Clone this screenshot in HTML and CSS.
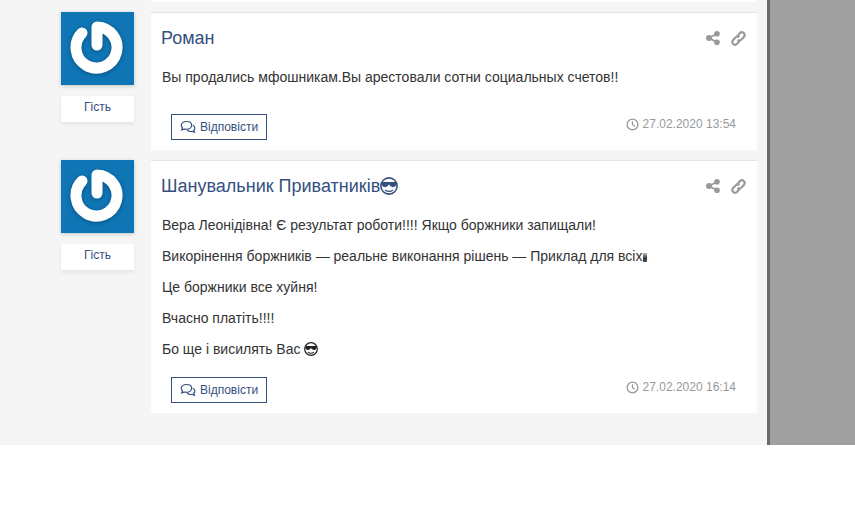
FILE: index.html
```html
<!DOCTYPE html>
<html>
<head lang="en">
    <meta charset="UTF-8">
    <title>Коментарі</title>
    <link rel="stylesheet" href="styles.css">
</head>
<body>
<svg class="defs" width="0" height="0">
    <symbol id="i-logo" viewBox="0 0 72 72">
        <path d="M21 21A20.500 20.500 0 1 0 36 15V33" fill="none" stroke="#fff" stroke-width="11" stroke-linecap="round" stroke-linejoin="round"/>
    </symbol>
    <symbol id="i-share" viewBox="0 0 14 14">
        <circle cx="11" cy="2.800" r="2.800"/>
        <circle cx="11" cy="11.200" r="2.800"/>
        <circle cx="3" cy="7" r="3"/>
        <path d="M3 7 11 2.800M3 7l8 4.200" stroke="currentColor" stroke-width="1.800" fill="none"/>
    </symbol>
    <symbol id="i-link" viewBox="0 0 16 16">
        <path d="M6.800 5.600 9.400 2.400a2.900 2.900 0 0 1 4.300 3.900L11 9.200a2.900 2.900 0 0 1-3.900.3M9.200 10.400l-2.600 3.200a2.900 2.900 0 0 1-4.300-3.900L5 6.800a2.900 2.900 0 0 1 3.900-.3" fill="none" stroke="currentColor" stroke-width="2.300"/>
    </symbol>
    <symbol id="i-clock" viewBox="0 0 14 14">
        <circle cx="7" cy="7" r="5.800" fill="none" stroke="currentColor" stroke-width="1.400"/>
        <path d="M7 3.400V7.300L9.600 9" fill="none" stroke="currentColor" stroke-width="1.300"/>
    </symbol>
    <symbol id="i-chat" viewBox="0 0 16 14">
        <path d="M6.500 1.500c-3 0-5.300 1.700-5.300 3.800 0 1 .5 1.800 1.300 2.500L1.800 10l2.600-1c.7.2 1.400.3 2.100.3 3 0 5.200-1.800 5.200-4s-2.200-3.800-5.200-3.800Z" fill="none" stroke="currentColor" stroke-width="1.200"/>
        <path d="M12.800 5.200c1.300.6 2.100 1.600 2.100 2.800 0 .9-.5 1.700-1.200 2.300l.7 2-2.500-1c-1.700.4-3.500 0-4.600-1" fill="none" stroke="currentColor" stroke-width="1.200"/>
    </symbol>
    <symbol id="i-cool" viewBox="0 0 16 16">
        <circle cx="8" cy="8" r="7.200" fill="#fff" stroke="currentColor" stroke-width="1.400"/>
        <path d="M1.500 4.500h13v1.500c0 2-1.500 3-3 3S8.800 8 8 6.500C7.200 8 6 9 4.500 9s-3-1-3-3Z" fill="currentColor"/>
        <path d="M4.500 11.500c2 1.500 5 1.500 7 0" fill="none" stroke="currentColor" stroke-width="1.200"/>
    </symbol>
</svg>
<div class="page">
    <div class="main">
        <div class="prev-card"></div>

        <div class="comment">
            <div class="author">
                <div class="avatar">
                    <svg class="logo"><use href="#i-logo"/></svg>
                </div>
                <div class="author-name">Гість</div>
            </div>
            <div class="card">
                <div class="card-head">
                    <h3 class="card-title">Роман</h3>
                    <div class="card-tools">
                        <svg class="tool"><use href="#i-share"/></svg>
                        <svg class="tool tool-link"><use href="#i-link"/></svg>
                    </div>
                </div>
                <div class="card-text">
                    <p>Вы продались мфошникам.Вы арестовали сотни социальных счетов!!</p>
                </div>
                <div class="card-foot">
                    <a class="reply"><svg class="reply-icon"><use href="#i-chat"/></svg>Відповісти</a>
                    <span class="date"><svg class="date-icon"><use href="#i-clock"/></svg>27.02.2020 13:54</span>
                </div>
            </div>
        </div>

        <div class="comment">
            <div class="author">
                <div class="avatar">
                    <svg class="logo"><use href="#i-logo"/></svg>
                </div>
                <div class="author-name">Гість</div>
            </div>
            <div class="card">
                <div class="card-head">
                    <h3 class="card-title">Шанувальник Приватників<svg class="emoji-big"><use href="#i-cool"/></svg></h3>
                    <div class="card-tools">
                        <svg class="tool"><use href="#i-share"/></svg>
                        <svg class="tool tool-link"><use href="#i-link"/></svg>
                    </div>
                </div>
                <div class="card-text">
                    <p>Вера Леонідівна! Є результат роботи!!!! Якщо боржники запищали!</p>
                    <p>Викорінення боржників — реальне виконання рішень — Приклад для всіх<span class="clipped-emoji"></span></p>
                    <p>Це боржники все хуйня!</p>
                    <p>Вчасно платіть!!!!</p>
                    <p>Бо ще і висилять Вас <svg class="emoji"><use href="#i-cool"/></svg></p>
                </div>
                <div class="card-foot">
                    <a class="reply"><svg class="reply-icon"><use href="#i-chat"/></svg>Відповісти</a>
                    <span class="date"><svg class="date-icon"><use href="#i-clock"/></svg>27.02.2020 16:14</span>
                </div>
            </div>
        </div>
    </div>
    <div class="side"></div>
</div>
</body>
</html>
```

FILE: styles.css
```css
*{
    margin: 0;
    padding: 0;
    box-sizing: border-box;
}
body{
    background: #fff;
    font-family: "Liberation Sans", Arial, sans-serif;
    font-size: 14px;
    color: #333;
}
.defs{
    display: block;
}
.page{
    display: flex;
    height: 445px;
}
.main{
    width: 767px;
    background: #f5f5f5;
    padding-left: 61px;
    padding-right: 10px;
}
.side{
    flex: 1;
    background: #a0a0a0;
    border-left: 3px solid #6a6a6a;
}
.prev-card{
    height: 2px;
    margin-left: 90px;
    background: #fff;
}
.comment{
    display: flex;
    margin-top: 10px;
}
.author{
    width: 73px;
    margin-right: 17px;
}
.avatar{
    width: 73px;
    height: 73px;
    background: #0f75b5;
    box-shadow: 0 1px 4px rgba(0,0,0,.2);
}
.logo{
    display: block;
    width: 72px;
    height: 72px;
    filter: blur(.5px) drop-shadow(0 1px 2px rgba(0,0,0,.3));
}
.author-name{
    margin-top: 11px;
    height: 26px;
    line-height: 23px;
    background: #fff;
    color: #34507e;
    font-size: 12px;
    text-align: center;
    box-shadow: 0 2px 4px rgba(0,0,0,.08);
}
.card{
    width: 606px;
    background: #fff;
    border-top: 1px solid #e4e4e4;
    padding: 0 11px 10px 10px;
}
.card-head{
    display: flex;
    justify-content: space-between;
    align-items: center;
    height: 50px;
}
.card-title{
    font-size: 18px;
    font-weight: normal;
    color: #34507e;
    display: flex;
    align-items: center;
}
.card-tools{
    display: flex;
    align-items: center;
    gap: 11px;
    color: #999;
}
.tool{
    width: 14px;
    height: 14px;
    fill: currentColor;
}
.tool-link{
    width: 15px;
    height: 15px;
}
.card-text{
    padding-left: 1px;
    padding-top: 4px;
    min-height: 33px;
}
.card-text p{
    line-height: 20px;
    margin-bottom: 11px;
}
.card-foot{
    display: flex;
    justify-content: space-between;
    align-items: center;
    padding: 0 10px;
    margin-top: 18px;
}
.reply{
    display: flex;
    align-items: center;
    height: 26px;
    width: 96px;
    border: 1px solid #34507e;
    color: #34507e;
    font-size: 12px;
    padding-left: 8px;
}
.reply-icon{
    width: 16px;
    height: 14px;
    margin-right: 4px;
}
.date{
    display: flex;
    align-items: center;
    font-size: 12px;
    color: #999;
    margin-bottom: 6px;
}
.date-icon{
    width: 13px;
    height: 13px;
    margin-right: 4px;
}
.emoji-big{
    width: 18px;
    height: 18px;
    color: #34507e;
}
.emoji{
    width: 14px;
    height: 14px;
    vertical-align: -2px;
    color: #222;
}
.clipped-emoji{
    display: inline-block;
    width: 4px;
    height: 9px;
    margin-left: 1px;
    vertical-align: -1px;
    background: linear-gradient(#bbb, #333 60%, #555);
}
```
